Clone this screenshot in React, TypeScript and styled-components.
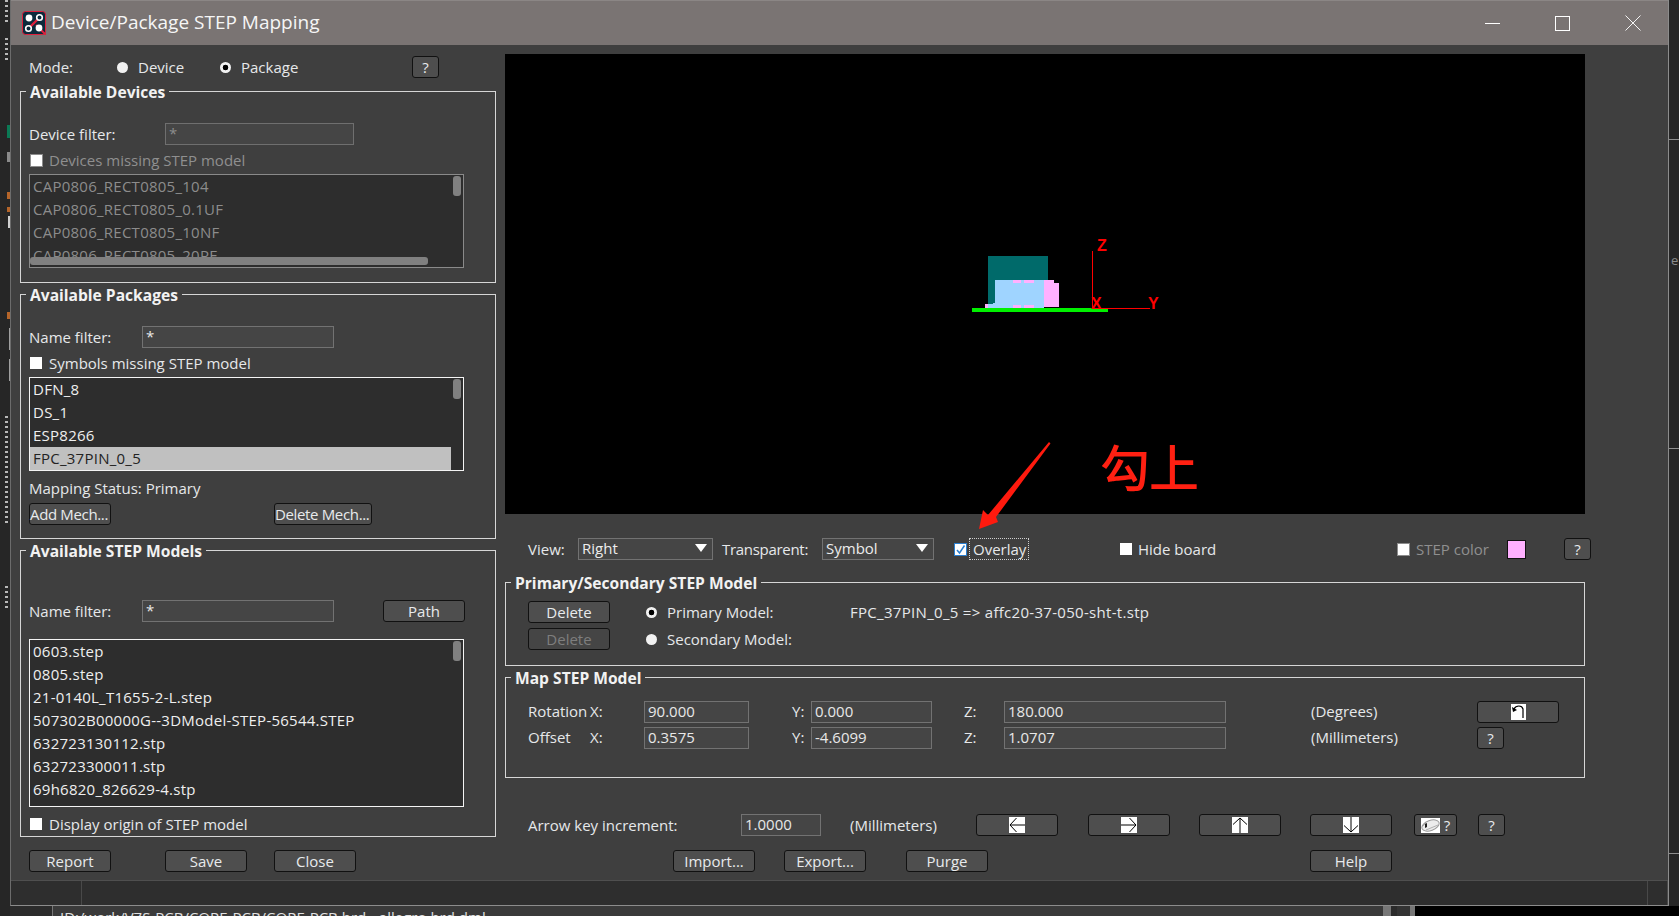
import React from 'react';
import styled, { createGlobalStyle } from 'styled-components';

const GlobalStyle = createGlobalStyle`
  html, body {
    margin: 0;
    padding: 0;
    background: #262626;
    overflow: hidden;
  }
  * {
    box-sizing: border-box;
  }
`;

const FONT = `"Open Sans", "Noto Sans", "Liberation Sans", sans-serif`;
const PANEL = '#3f3f3f';

const Desktop = styled.div`
  width: 1679px;
  height: 916px;
  display: flex;
  overflow: hidden;
  background: #262626;
  font-family: ${FONT};
  font-size: 15px;
  color: #e6e8ea;
`;

const SideStrip = styled.div`
  flex: 0 0 10px;
  display: flex;
  flex-direction: column;
  align-items: flex-end;
  overflow: hidden;
`;

const StripMark = styled.div<{ $top: number; $h: number; $w?: number; $color?: string; $dots?: boolean }>`
  flex: none;
  margin-top: ${(p) => p.$top}px;
  height: ${(p) => p.$h}px;
  width: ${(p) => p.$w ?? 3}px;
  margin-right: ${(p) => (p.$dots ? 2 : 0)}px;
  ${(p) =>
    p.$dots
      ? `background: repeating-linear-gradient(to bottom, #b8b8b8 0 2px, transparent 2px 5px);`
      : `background: ${p.$color ?? '#888'};`}
`;

const RightMark = styled.div<{ $top: number }>`
  flex: none;
  width: 10px;
  height: 1px;
  margin-top: ${(p) => p.$top}px;
  background: #8f8f8f;
`;

const RightGlyph = styled.div<{ $top: number }>`
  flex: none;
  width: 10px;
  height: 16px;
  margin-top: ${(p) => p.$top}px;
  padding-left: 2px;
  line-height: 16px;
  font-size: 13px;
  color: #8c8c8c;
`;

const Column = styled.div`
  flex: 0 0 1659px;
  display: flex;
  flex-direction: column;
`;

const Window = styled.div`
  height: 906px;
  display: flex;
  flex-direction: column;
  background: ${PANEL};
  border-left: 1px solid #6c6c6c;
  border-right: 1px solid #8c8c8c;
  border-bottom: 1px solid #8c8c8c;
`;

const TitleBar = styled.div`
  flex: 0 0 45px;
  display: flex;
  align-items: center;
  padding-left: 11px;
  background: #7a7473;
  border-top: 1px solid #8b8685;
`;

const TitleText = styled.div`
  margin: 0 0 2px 5px;
  font-size: 19px;
  color: #f6f6f6;
  white-space: nowrap;
`;

const WindowControls = styled.div`
  margin-left: auto;
  display: flex;
  align-items: center;
  padding-right: 27px;
  gap: 55px;
`;

const Body = styled.div`
  flex: 1;
  display: flex;
  min-height: 0;
`;

const LeftPane = styled.div`
  flex: 0 0 494px;
  padding: 11px 0 0 9px;
  display: flex;
  flex-direction: column;
`;

const RightPane = styled.div`
  position: relative;
  flex: 0 0 1081px;
  padding-top: 9px;
  display: flex;
  flex-direction: column;
`;

const ModeRow = styled.div`
  display: grid;
  grid-template-columns: 88px 21px 82px 21px 171px 27px;
  align-items: center;
  height: 22px;
  padding-left: 9px;
  margin-bottom: 13px;
`;

const Group = styled.div<{ $h: number; $mt?: number }>`
  flex: none;
  display: flex;
  flex-direction: column;
  width: 476px;
  height: ${(p) => p.$h}px;
  margin-top: ${(p) => p.$mt ?? 0}px;
  padding-left: 8px;
  border: 1px solid #d6d6d6;
`;

const Legend = styled.div`
  align-self: flex-start;
  height: 22px;
  margin: -12px 0 0 -3px;
  padding: 0 4px;
  line-height: 24px;
  font-size: 15.6px;
  font-weight: 700;
  color: #f2f2f2;
  background: ${PANEL};
  white-space: nowrap;
`;

const FilterRow = styled.div<{ $mt: number }>`
  display: flex;
  align-items: center;
  height: 22px;
  margin-top: ${(p) => p.$mt}px;
`;

const RowLabel = styled.div<{ $w: number }>`
  flex: 0 0 ${(p) => p.$w}px;
  padding-bottom: 1px;
  white-space: nowrap;
`;

const TextBox = styled.input<{ $w?: number; $dim?: boolean }>`
  width: ${(p) => (p.$w ? `${p.$w}px` : '100%')};
  height: 22px;
  padding: 0 2px 2px 3px;
  font-family: ${FONT};
  font-size: 15px;
  color: ${(p) => (p.$dim ? '#8c8c8c' : '#e8e8e8')};
  background: #454545;
  border: 1px solid ${(p) => (p.$dim ? '#6f6f6f' : '#727272')};
  border-radius: 0;
  outline: none;
`;

const Check = styled.span<{ $grey?: boolean }>`
  flex: none;
  display: block;
  width: ${(p) => (p.$grey ? 13 : 12)}px;
  height: ${(p) => (p.$grey ? 13 : 12)}px;
  margin: 0 ${(p) => (p.$grey ? 6 : 7)}px 0 1px;
  background: #fff;
  border: 1px solid ${(p) => (p.$grey ? '#8c8c8c' : '#fff')};
`;

const CheckRow = styled.div<{ $mt: number; $dim?: boolean }>`
  display: flex;
  align-items: center;
  height: 20px;
  padding-bottom: 0;
  margin-top: ${(p) => p.$mt}px;
  margin-bottom: 2px;
  color: ${(p) => (p.$dim ? '#8f8f8f' : 'inherit')};
  white-space: nowrap;
`;

const ListFrame = styled.div<{ $h: number; $mt: number; $dim?: boolean }>`
  position: relative;
  flex: none;
  width: 435px;
  height: ${(p) => p.$h}px;
  margin-top: ${(p) => p.$mt}px;
  overflow: hidden;
  background: #2d2d2d;
  border: 1px solid ${(p) => (p.$dim ? '#8a8a8a' : '#f4f4f4')};
  color: ${(p) => (p.$dim ? '#8c8c8c' : '#efefef')};
`;

const ListRow = styled.div<{ $selected?: boolean }>`
  width: 421px;
  height: 23px;
  padding-left: 3px;
  line-height: 23px;
  letter-spacing: 0.25px;
  white-space: nowrap;
  background: ${(p) => (p.$selected ? '#c0c0c0' : 'transparent')};
  color: ${(p) => (p.$selected ? '#232323' : 'inherit')};
`;

const VThumb = styled.div`
  position: absolute;
  top: 1px;
  right: 2px;
  width: 8px;
  height: 20px;
  border-radius: 3px;
  background: #808080;
`;

const HThumb = styled.div`
  position: absolute;
  left: 0;
  bottom: 2px;
  width: 398px;
  height: 8px;
  border-radius: 3px;
  background: #808080;
`;

const Btn = styled.button<{ $w?: number; $disabled?: boolean; $tight?: boolean }>`
  display: flex;
  align-items: center;
  justify-content: ${(p) => (p.$tight ? 'flex-start' : 'center')};
  width: ${(p) => p.$w ?? 82}px;
  height: 22px;
  padding: 0;
  font-family: ${FONT};
  font-size: 15px;
  line-height: 22px;
  letter-spacing: ${(p) => (p.$tight ? '-0.35px' : '0')};
  white-space: nowrap;
  color: ${(p) => (p.$disabled ? '#7e7e7e' : '#e8eaec')};
  background: ${(p) => (p.$disabled ? '#454545' : '#4e4e4e')};
  border: 1px solid #111;
  border-radius: 3px;
`;

const PathBtn = styled(Btn)`
  margin-left: 49px;
`;

const MechRow = styled.div`
  display: grid;
  grid-template-columns: 245px 98px;
  margin-top: 2px;
`;

const StatusLine = styled.div`
  height: 22px;
  margin-top: 6px;
  margin-bottom: 2px;
  line-height: 22px;
`;

const FooterLeft = styled.div`
  display: grid;
  grid-template-columns: 136px 109px 82px;
  margin-top: 13px;
  padding-left: 9px;
`;

const RadioDot = styled.span<{ $on?: boolean }>`
  display: block;
  justify-self: start;
  width: 11px;
  height: 11px;
  border-radius: 50%;
  background: ${(p) => (p.$on ? 'radial-gradient(circle, #000 0 2.6px, #f2f2f2 3.1px)' : '#f2f2f2')};
`;

const Viewport = styled.div`
  flex: 0 0 460px;
  width: 1080px;
  background: #000;
`;

const SceneSvg = styled.svg`
  display: block;
`;

const ViewRow = styled.div`
  display: grid;
  grid-template-columns: 50px 135px 109px 132px 166px 277px 110px 57px 27px;
  align-items: center;
  height: 22px;
  margin-top: 24px;
  padding-left: 23px;
  white-space: nowrap;
`;

const CellLabel = styled.div<{ $pl?: number; $dim?: boolean }>`
  padding-left: ${(p) => p.$pl ?? 0}px;
  white-space: nowrap;
  color: ${(p) => (p.$dim ? '#8f8f8f' : 'inherit')};
`;

const TransparentLabel = styled(CellLabel)`
  letter-spacing: -0.3px;
`;

const Combo = styled.div<{ $w: number }>`
  display: flex;
  align-items: center;
  justify-content: space-between;
  width: ${(p) => p.$w}px;
  height: 22px;
  padding: 0 5px 2px 3px;
  background: #454545;
  border: 1px solid #727272;
  color: #ececec;
`;

const ComboArrow = styled.span`
  width: 0;
  height: 0;
  border-left: 6px solid transparent;
  border-right: 6px solid transparent;
  border-top: 8px solid #fff;
`;

const OverlayCell = styled.div`
  display: flex;
  align-items: center;
`;

const CheckedBox = styled.span`
  flex: none;
  display: flex;
  width: 13px;
  height: 13px;
  margin-right: 2px;
  background: #fff;
  border: 1px solid #2a7fd0;
`;

const FocusLabel = styled.span`
  height: 22px;
  padding: 0 2px 0 3px;
  line-height: 20px;
  border: 1px dotted #cfcfcf;
`;

const PlainCheckCell = styled.div<{ $dim?: boolean }>`
  display: flex;
  align-items: center;
  margin-left: -1px;
  color: ${(p) => (p.$dim ? '#8f8f8f' : 'inherit')};

  & > span {
    margin-right: 6px;
  }
`;

const Swatch = styled.span`
  display: block;
  width: 19px;
  height: 19px;
  background: #ffb0ff;
  border: 1px solid #111;
`;

const WideGroup = styled.div<{ $h: number; $mt: number }>`
  flex: none;
  display: flex;
  flex-direction: column;
  width: 1080px;
  height: ${(p) => p.$h}px;
  margin-top: ${(p) => p.$mt}px;
  padding-left: 22px;
  border: 1px solid #d6d6d6;
`;

const WideLegend = styled(Legend)`
  margin-left: -17px;
`;

const ModelGrid = styled.div`
  display: grid;
  grid-template-columns: 118px 21px 183px 1fr;
  grid-auto-rows: 22px;
  row-gap: 5px;
  align-items: center;
  margin-top: 8px;
`;

const ModelTarget = styled.span`
  letter-spacing: 0.3px;
`;

const MapGrid = styled.div`
  display: grid;
  grid-template-columns: 116px 105px 62px 121px 72px 222px 251px 82px;
  grid-auto-rows: 22px;
  row-gap: 4px;
  align-items: center;
  margin-top: 13px;

  & > div {
    margin-top: -2px;
  }
`;

const AxisLabel = styled.div`
  display: grid;
  grid-template-columns: 62px 1fr;
  white-space: nowrap;
`;

const ArrowRow = styled.div`
  display: grid;
  grid-template-columns: 213px 80px 155px 112px 111px 111px 104px 64px 27px;
  align-items: center;
  height: 22px;
  margin-top: 36px;
  padding-left: 23px;
`;

const FooterRight = styled.div`
  display: grid;
  grid-template-columns: 145px 111px 122px 404px 82px;
  margin-top: 14px;
  padding-left: 23px;
`;

const HelpSmall = styled.span`
  margin-left: 4px;
`;

const AnnotationText = styled.div`
  position: absolute;
  left: 595px;
  top: 390px;
  font-family: "Noto Sans CJK SC", sans-serif;
  font-size: 50px;
  font-weight: 500;
  line-height: 60px;
  letter-spacing: -1px;
  color: #ff2012;
`;

const AnnotationArrow = styled.svg`
  position: absolute;
  left: 470px;
  top: 395px;
`;

const StatusBar = styled.div`
  flex: 0 0 25px;
  display: flex;
  background: #2e2e2e;
  border-top: 1px solid #4f4f4f;
`;

const StatusCell = styled.div<{ $w?: number }>`
  flex: ${(p) => (p.$w ? `0 0 ${p.$w}px` : 1)};
  border-right: 1px solid #494949;
`;

const UnderWindow = styled.div`
  flex: 1;
  display: flex;
  overflow: hidden;
  background: #3a3a3a;
`;

const UnderLeft = styled.div`
  flex: 0 0 43px;
  background: #2b2b2b;
  border-right: 1px solid #777;
`;

const UnderPath = styled.div`
  flex: 0 0 1330px;
  padding: 4px 0 0 7px;
  line-height: 14px;
  font-size: 15px;
  color: #e2e2e2;
  white-space: nowrap;
`;

const UnderBar = styled.div<{ $w: number; $c: string }>`
  flex: 0 0 ${(p) => p.$w}px;
  background: ${(p) => p.$c};
`;

const RightFill = styled.div`
  flex: 1;
  display: flex;
  flex-direction: column;
`;

const RightStack = styled.div`
  height: 906px;
  display: flex;
  flex-direction: column;
`;

const BlackCorner = styled.div`
  flex: 1;
  background: #000;
`;

const Logo = () => (
  <svg width="24" height="24" viewBox="0 0 24 24">
    <rect x="0.5" y="0.5" width="23" height="23" rx="3" fill="#0c2a3c" stroke="#e0203c" />
    <path d="M14 14 L24 24" stroke="#e0203c" strokeWidth="2" />
    <path d="M7 17 L17 7" stroke="#e0203c" strokeWidth="2.4" />
    <circle cx="7" cy="7" r="3.4" fill="#fff" />
    <circle cx="17.5" cy="6.5" r="2.8" fill="#0c2a3c" stroke="#fff" strokeWidth="1.6" />
    <circle cx="6.5" cy="17.5" r="2.8" fill="#0c2a3c" stroke="#fff" strokeWidth="1.6" />
    <circle cx="17" cy="17" r="3.4" fill="#fff" />
  </svg>
);

const Minimize = () => (
  <svg width="15" height="15" viewBox="0 0 15 15">
    <path d="M0 7.5 H15" stroke="#fff" strokeWidth="1" />
  </svg>
);

const Maximize = () => (
  <svg width="15" height="15" viewBox="0 0 15 15">
    <rect x="0.5" y="0.5" width="14" height="14" fill="none" stroke="#fff" />
  </svg>
);

const CloseIcon = () => (
  <svg width="16" height="16" viewBox="0 0 16 16">
    <path d="M0.5 0.5 L15.5 15.5 M15.5 0.5 L0.5 15.5" stroke="#f4f4f4" strokeWidth="1" />
  </svg>
);

const Check16 = () => (
  <svg width="11" height="11" viewBox="0 0 11 11">
    <path d="M2 6 L4.5 9 L9.5 1.5" fill="none" stroke="#2a7fd0" strokeWidth="1.5" />
  </svg>
);

// bitmap style arrows from the old toolbar: white tile with a thin black arrow
const ArrowIcon: React.FC<{ dir: 'left' | 'right' | 'up' | 'down' }> = ({ dir }) => {
  const angle = { left: 0, up: 90, right: 180, down: 270 }[dir];
  return (
    <svg width="16" height="16" viewBox="0 0 16 16">
      <rect width="16" height="16" fill="#fff" />
      <g transform={`rotate(${angle} 8 8)`}>
        <path d="M1 8 H16 M1 8 L7.5 1 M1 8 L7.5 15" fill="none" stroke="#000" strokeWidth="1" />
      </g>
    </svg>
  );
};

const RotateIcon = () => (
  <svg width="15" height="16" viewBox="0 0 15 16">
    <rect width="15" height="16" fill="#fff" />
    <path d="M3 5 C5 1 11 1 12 5 V14" fill="none" stroke="#000" strokeWidth="1.2" />
    <path d="M1 3 L2 8 L6 6 Z" fill="#000" />
  </svg>
);

const MouseIcon = () => (
  <svg width="19" height="15" viewBox="0 0 19 15">
    <rect width="19" height="15" fill="#fff" />
    <ellipse cx="9.5" cy="7.5" rx="9" ry="5" transform="rotate(-20 9.5 7.5)" fill="#ececec" stroke="#9a9a9a" />
    <path d="M1 9 L5 5 M5 12 L17 7" stroke="#b0b0b0" />
    <path d="M4 6 L6 5 L6 9 L4 10 Z" fill="#222" />
  </svg>
);

const Scene = () => (
  <SceneSvg width="1080" height="460" viewBox="505 54 1080 460">
    <rect x="988" y="256" width="60" height="51" fill="#006a6a" />
    <rect x="985" y="304" width="12" height="4" fill="#ffb0ff" />
    <rect x="995" y="280" width="49" height="28" fill="#9fd4ff" />
    <rect x="993" y="303" width="4" height="5" fill="#9fd4ff" />
    <rect x="988" y="304" width="7" height="4" fill="#9fd4ff" />
    <rect x="1013" y="280" width="8" height="3" fill="#ffb0ff" />
    <rect x="1024" y="280" width="10" height="3" fill="#ffb0ff" />
    <rect x="1013" y="305" width="8" height="3" fill="#ffb0ff" />
    <rect x="1024" y="305" width="10" height="3" fill="#ffb0ff" />
    <rect x="1044" y="280" width="10" height="4" fill="#ffb0ff" />
    <rect x="1044" y="283" width="15" height="24" fill="#ffb0ff" />
    <rect x="972" y="308" width="136" height="4" fill="#00f000" />
    <path d="M1092.5 251 V309 M1092 308.5 H1150" stroke="#f00" strokeWidth="1" fill="none" />
    <g fill="#f00" fontFamily="'Liberation Sans', sans-serif" fontSize="16" fontWeight="700">
      <text x="1097" y="251">Z</text>
      <text x="1091" y="309">X</text>
      <text x="1148" y="309">Y</text>
    </g>
  </SceneSvg>
);

const deviceRows = ['CAP0806_RECT0805_104', 'CAP0806_RECT0805_0.1UF', 'CAP0806_RECT0805_10NF', 'CAP0806_RECT0805_20PF'];
const packageRows = ['DFN_8', 'DS_1', 'ESP8266', 'FPC_37PIN_0_5'];
const stepRows = [
  '0603.step',
  '0805.step',
  '21-0140L_T1655-2-L.step',
  '507302B00000G--3DModel-STEP-56544.STEP',
  '632723130112.stp',
  '632723300011.stp',
  '69h6820_826629-4.stp',
];

export default function App() {
  return (
    <>
      <GlobalStyle />
      <Desktop>
        <SideStrip>
          <StripMark $top={0} $h={25} $dots />
          <StripMark $top={13} $h={25} $dots />
          <StripMark $top={62} $h={13} $color="#0b7a55" />
          <StripMark $top={14} $h={10} $color="#8a8a8a" />
          <StripMark $top={30} $h={7} $color="#b5652a" />
          <StripMark $top={8} $h={5} $color="#b5652a" />
          <StripMark $top={4} $h={12} $w={2} $color="#d0d0d0" />
          <StripMark $top={84} $h={7} $color="#b5652a" />
          <StripMark $top={9} $h={22} $w={1} $color="#a0a0a0" />
          <StripMark $top={9} $h={22} $w={1} $color="#a0a0a0" />
          <StripMark $top={35} $h={110} $dots />
          <StripMark $top={60} $h={25} $dots />
        </SideStrip>
        <Column>
          <Window>
            <TitleBar>
              <Logo />
              <TitleText>Device/Package STEP Mapping</TitleText>
              <WindowControls>
                <Minimize />
                <Maximize />
                <CloseIcon />
              </WindowControls>
            </TitleBar>
            <Body>
              <LeftPane>
                <ModeRow>
                  <span>Mode:</span>
                  <RadioDot />
                  <span>Device</span>
                  <RadioDot $on />
                  <span>Package</span>
                  <Btn $w={27}>?</Btn>
                </ModeRow>

                <Group $h={192}>
                  <Legend>Available Devices</Legend>
                  <FilterRow $mt={21}>
                    <RowLabel $w={136}>Device filter:</RowLabel>
                    <TextBox $w={189} $dim readOnly value="*" />
                  </FilterRow>
                  <CheckRow $mt={5} $dim>
                    <Check $grey />
                    Devices missing STEP model
                  </CheckRow>
                  <ListFrame $h={94} $mt={2} $dim>
                    {deviceRows.map((row) => (
                      <ListRow key={row}>{row}</ListRow>
                    ))}
                    <VThumb />
                    <HThumb />
                  </ListFrame>
                </Group>

                <Group $h={245} $mt={11}>
                  <Legend>Available Packages</Legend>
                  <FilterRow $mt={21}>
                    <RowLabel $w={113}>Name filter:</RowLabel>
                    <TextBox $w={192} readOnly value="*" />
                  </FilterRow>
                  <CheckRow $mt={5}>
                    <Check />
                    Symbols missing STEP model
                  </CheckRow>
                  <ListFrame $h={94} $mt={2}>
                    {packageRows.map((row) => (
                      <ListRow key={row} $selected={row === 'FPC_37PIN_0_5'}>
                        {row}
                      </ListRow>
                    ))}
                    <VThumb />
                  </ListFrame>
                  <StatusLine>Mapping Status: Primary</StatusLine>
                  <MechRow>
                    <Btn $tight>Add Mech...</Btn>
                    <Btn $w={98} $tight>
                      Delete Mech...
                    </Btn>
                  </MechRow>
                </Group>

                <Group $h={287} $mt={11}>
                  <Legend>Available STEP Models</Legend>
                  <FilterRow $mt={39}>
                    <RowLabel $w={113}>Name filter:</RowLabel>
                    <TextBox $w={192} readOnly value="*" />
                    <PathBtn>Path</PathBtn>
                  </FilterRow>
                  <ListFrame $h={168} $mt={17}>
                    {stepRows.map((row) => (
                      <ListRow key={row}>{row}</ListRow>
                    ))}
                    <VThumb />
                  </ListFrame>
                  <CheckRow $mt={7}>
                    <Check />
                    Display origin of STEP model
                  </CheckRow>
                </Group>

                <FooterLeft>
                  <Btn>Report</Btn>
                  <Btn>Save</Btn>
                  <Btn>Close</Btn>
                </FooterLeft>
              </LeftPane>

              <RightPane>
                <Viewport>
                  <Scene />
                </Viewport>

                <ViewRow>
                  <CellLabel>View:</CellLabel>
                  <Combo $w={135}>
                    Right
                    <ComboArrow />
                  </Combo>
                  <TransparentLabel $pl={9}>Transparent:</TransparentLabel>
                  <Combo $w={112}>
                    Symbol
                    <ComboArrow />
                  </Combo>
                  <OverlayCell>
                    <CheckedBox>
                      <Check16 />
                    </CheckedBox>
                    <FocusLabel>Overlay</FocusLabel>
                  </OverlayCell>
                  <PlainCheckCell>
                    <Check />
                    Hide board
                  </PlainCheckCell>
                  <PlainCheckCell $dim>
                    <Check $grey />
                    STEP color
                  </PlainCheckCell>
                  <Swatch />
                  <Btn $w={27}>?</Btn>
                </ViewRow>

                <WideGroup $h={84} $mt={22}>
                  <WideLegend>Primary/Secondary STEP Model</WideLegend>
                  <ModelGrid>
                    <Btn>Delete</Btn>
                    <RadioDot $on />
                    <span>Primary Model:</span>
                    <ModelTarget>FPC_37PIN_0_5 =&gt; affc20-37-050-sht-t.stp</ModelTarget>
                    <Btn $disabled>Delete</Btn>
                    <RadioDot />
                    <span>Secondary Model:</span>
                  </ModelGrid>
                </WideGroup>

                <WideGroup $h={101} $mt={11}>
                  <WideLegend>Map STEP Model</WideLegend>
                  <MapGrid>
                    <AxisLabel>
                      <span>Rotation</span>
                      <span>X:</span>
                    </AxisLabel>
                    <TextBox readOnly value="90.000" />
                    <CellLabel $pl={43}>Y:</CellLabel>
                    <TextBox readOnly value="0.000" />
                    <CellLabel $pl={32}>Z:</CellLabel>
                    <TextBox readOnly value="180.000" />
                    <CellLabel $pl={85}>(Degrees)</CellLabel>
                    <Btn>
                      <RotateIcon />
                    </Btn>

                    <AxisLabel>
                      <span>Offset</span>
                      <span>X:</span>
                    </AxisLabel>
                    <TextBox readOnly value="0.3575" />
                    <CellLabel $pl={43}>Y:</CellLabel>
                    <TextBox readOnly value="-4.6099" />
                    <CellLabel $pl={32}>Z:</CellLabel>
                    <TextBox readOnly value="1.0707" />
                    <CellLabel $pl={85}>(Millimeters)</CellLabel>
                    <Btn $w={27}>?</Btn>
                  </MapGrid>
                </WideGroup>

                <ArrowRow>
                  <span>Arrow key increment:</span>
                  <TextBox readOnly value="1.0000" />
                  <CellLabel $pl={29}>(Millimeters)</CellLabel>
                  <Btn>
                    <ArrowIcon dir="left" />
                  </Btn>
                  <Btn>
                    <ArrowIcon dir="right" />
                  </Btn>
                  <Btn>
                    <ArrowIcon dir="up" />
                  </Btn>
                  <Btn>
                    <ArrowIcon dir="down" />
                  </Btn>
                  <Btn $w={43}>
                    <MouseIcon />
                    <HelpSmall>?</HelpSmall>
                  </Btn>
                  <Btn $w={27}>?</Btn>
                </ArrowRow>

                <FooterRight>
                  <span />
                  <Btn>Import...</Btn>
                  <Btn>Export...</Btn>
                  <Btn>Purge</Btn>
                  <Btn>Help</Btn>
                </FooterRight>

                <AnnotationArrow width="80" height="92" viewBox="0 0 80 92">
                  <path d="M74 2 L75.5 3.5 L21 77 L23 82 L4 89 L8 70 L13 75 Z" fill="#ff1a0e" />
                </AnnotationArrow>
                <AnnotationText>勾上</AnnotationText>
              </RightPane>
            </Body>
            <StatusBar>
              <StatusCell $w={71} />
              <StatusCell />
              <StatusCell $w={20} />
            </StatusBar>
          </Window>
          <UnderWindow>
            <UnderLeft />
            <UnderPath>ID:/work/V7S-PCB/CORE-PCB/CORE-PCB.brd - allegro.brd.dml</UnderPath>
            <UnderBar $w={8} $c="#777" />
            <UnderBar $w={6} $c="#2b2b2b" />
            <UnderBar $w={13} $c="#333" />
            <UnderBar $w={5} $c="#777" />
            <BlackCorner />
          </UnderWindow>
        </Column>
        <RightFill>
          <RightStack>
            <RightMark $top={139} />
            <RightGlyph $top={112}>e</RightGlyph>
            <RightMark $top={180} />
            <RightMark $top={404} />
          </RightStack>
          <BlackCorner />
        </RightFill>
      </Desktop>
    </>
  );
}
